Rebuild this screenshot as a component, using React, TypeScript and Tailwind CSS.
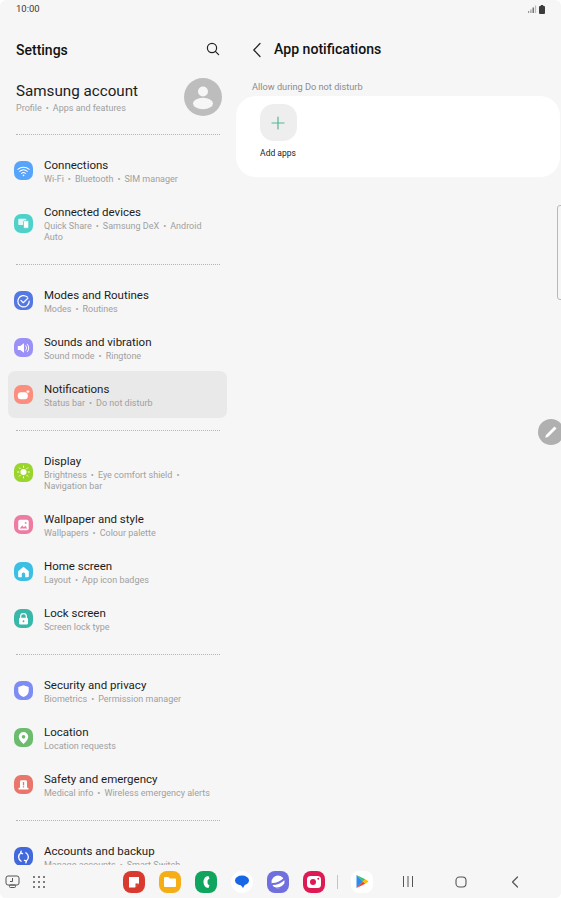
import React from "react";

const Dot = () => <><span className="mx-[4px] text-[#a4a4a4]">•</span><wbr /></>;

type Row = { title: string; sub: React.ReactNode; color: string; icon: React.ReactNode; active?: boolean; tall?: boolean };

const Wifi = (
  <svg viewBox="0 0 20 20" className="w-[20px] h-[20px]" fill="none" stroke="#fff" strokeWidth="1.1" strokeLinecap="round">
    <path d="M4 8.200c3.400-3 8.600-3 12 0" />
    <path d="M6 10.400c2.300-2 5.700-2 8 0" />
    <path d="M8 12.500c1.200-1 2.800-1 4 0" />
    <circle cx="10" cy="14.600" r="0.9" fill="#fff" stroke="none" />
  </svg>
);
const Devices = (
  <svg viewBox="0 0 20 20" className="w-[20px] h-[20px]" fill="#fff">
    <rect x="4.500" y="5.500" width="8.500" height="6.500" rx="1" opacity="0.85" />
    <rect x="10" y="7.500" width="5.500" height="8" rx="1" stroke="#4fd1c9" strokeWidth="0.8" />
  </svg>
);
const Modes = (
  <svg viewBox="0 0 20 20" className="w-[20px] h-[20px]" fill="none" stroke="#fff" strokeWidth="1.300" strokeLinecap="round" strokeLinejoin="round">
    <path d="M14 5.800A6 6 0 1 0 16 10" />
    <path d="M7.300 9.400l2.400 2.400 5-4.800" />
  </svg>
);
const Sound = (
  <svg viewBox="0 0 20 20" className="w-[20px] h-[20px]">
    <path d="M4 8h2.600L10.500 5v10l-3.900-3H4z" fill="#fff" />
    <path d="M12.400 7.600a3.400 3.400 0 0 1 0 4.800M14 6a5.600 5.600 0 0 1 0 8" fill="none" stroke="#fff" strokeWidth="1" strokeLinecap="round" />
  </svg>
);
const Bell = (
  <svg viewBox="0 0 20 20" className="w-[20px] h-[20px]" fill="#fff">
    <rect x="4" y="7" width="10.500" height="7.500" rx="3.200" />
    <circle cx="14.600" cy="6.400" r="1.700" stroke="#fb8e7f" strokeWidth="0.6" />
  </svg>
);
const Sun = (
  <svg viewBox="0 0 20 20" className="w-[20px] h-[20px]" stroke="#fff" strokeWidth="1" strokeLinecap="round">
    <circle cx="10" cy="10" r="3.200" fill="#fff" stroke="none" />
    <path d="M10 3.800v1.200M10 15v1.200M3.800 10H5M15 10h1.200M5.600 5.600l.9.900M13.500 13.500l.9.900M5.600 14.400l.9-.9M13.500 6.500l.9-.9" />
  </svg>
);
const Wallpaper = (
  <svg viewBox="0 0 20 20" className="w-[20px] h-[20px]">
    <rect x="4.500" y="4.500" width="11" height="11" rx="1.800" fill="#fff" />
    <path d="M6 13.800l2.600-3.200 1.800 1.800 1.600-1.600 2 3z" fill="#ee7ba2" />
    <circle cx="12.300" cy="7.800" r="1" fill="#ee7ba2" />
  </svg>
);
const Home = (
  <svg viewBox="0 0 20 20" className="w-[20px] h-[20px]">
    <path d="M10 4.600l5.600 4.600v5.400a.9.900 0 0 1-.9.900h-2.900v-3.200a1.800 1.800 0 0 0-3.600 0v3.200H5.300a.9.900 0 0 1-.9-.9V9.200z" fill="#fff" />
  </svg>
);
const Lock = (
  <svg viewBox="0 0 20 20" className="w-[20px] h-[20px]">
    <path d="M7 9V7.300a3 3 0 0 1 6 0V9" fill="none" stroke="#fff" strokeWidth="1.300" />
    <rect x="5.300" y="8.800" width="9.400" height="7" rx="1.300" fill="#fff" />
    <circle cx="10" cy="12.300" r="1" fill="#37b8a8" />
  </svg>
);
const Shield = (
  <svg viewBox="0 0 20 20" className="w-[20px] h-[20px]">
    <path d="M10 4l5.500 1.800v4.200c0 3-2.300 5.200-5.500 6.200-3.200-1-5.500-3.200-5.500-6.200V5.800z" fill="#fff" />
  </svg>
);
const Pin = (
  <svg viewBox="0 0 20 20" className="w-[20px] h-[20px]">
    <path d="M10 3.800a5 5 0 0 1 5 5c0 3-3 5.600-5 7.500-2-1.900-5-4.500-5-7.500a5 5 0 0 1 5-5z" fill="#fff" />
    <circle cx="10" cy="8.800" r="1.900" fill="#6dbb6e" />
  </svg>
);
const Alert = (
  <svg viewBox="0 0 20 20" className="w-[20px] h-[20px]">
    <path d="M7.800 5h4.400a1.500 1.500 0 0 1 1.500 1.500V13h1.500v1.800H4.800V13h1.500V6.500A1.500 1.500 0 0 1 7.800 5z" fill="#fff" />
    <rect x="9.300" y="6.800" width="1.400" height="3.600" fill="#e9756b" />
    <rect x="9.300" y="11.200" width="1.400" height="1.400" fill="#e9756b" />
  </svg>
);
const Sync = (
  <svg viewBox="0 0 20 20" className="w-[20px] h-[20px]" fill="none" stroke="#fff" strokeWidth="1.400" strokeLinecap="round" strokeLinejoin="round">
    <path d="M7.500 14.500A5.300 5.300 0 0 1 7 5.700M12.500 5.500a5.300 5.300 0 0 1 .5 8.800" />
    <path d="M7.500 3.800L7 5.900l2 .5M12.500 16.200l.5-2.100-2-.5" />
  </svg>
);

const groups: Row[][] = [
  [
    { title: "Connections", sub: <>Wi-Fi<Dot />Bluetooth<Dot />SIM manager</>, color: "bg-[#56a5fb]", icon: Wifi },
    { title: "Connected devices", sub: <>Quick Share<Dot />Samsung DeX<Dot />Android Auto</>, color: "bg-[#4fd1c9]", icon: Devices, tall: true },
  ],
  [
    { title: "Modes and Routines", sub: <>Modes<Dot />Routines</>, color: "bg-[#5378e3]", icon: Modes },
    { title: "Sounds and vibration", sub: <>Sound mode<Dot />Ringtone</>, color: "bg-[#9a90f6]", icon: Sound },
    { title: "Notifications", sub: <>Status bar<Dot />Do not disturb</>, color: "bg-[#fb8e7f]", icon: Bell, active: true },
  ],
  [
    { title: "Display", sub: <>Brightness<Dot />Eye comfort shield<Dot />Navigation bar</>, color: "bg-[#9ad52c]", icon: Sun, tall: true },
    { title: "Wallpaper and style", sub: <>Wallpapers<Dot />Colour palette</>, color: "bg-[#ee7ba2]", icon: Wallpaper },
    { title: "Home screen", sub: <>Layout<Dot />App icon badges</>, color: "bg-[#3dbfe4]", icon: Home },
    { title: "Lock screen", sub: "Screen lock type", color: "bg-[#37b8a8]", icon: Lock },
  ],
  [
    { title: "Security and privacy", sub: <>Biometrics<Dot />Permission manager</>, color: "bg-[#7e8cf6]", icon: Shield },
    { title: "Location", sub: "Location requests", color: "bg-[#6dbb6e]", icon: Pin },
    { title: "Safety and emergency", sub: <>Medical info<Dot />Wireless emergency alerts</>, color: "bg-[#e9756b]", icon: Alert },
  ],
  [
    { title: "Accounts and backup", sub: <>Manage accounts<Dot />Smart Switch</>, color: "bg-[#4169dd]", icon: Sync },
  ],
];

const Divider = () => (
  <div className="mx-[16px] my-[12px] h-px border-t border-dotted border-[#b4b4b4]" />
);

function SettingRow({ r }: { r: Row }) {
  return (
    <div className={`ml-[8px] mr-[9px] flex items-center rounded-[7px] pl-[6px] pr-[16px] ${r.tall ? "h-[58px]" : "h-[47px]"} ${r.active ? "bg-[#e9e9e9]" : ""}`}>
      <div className={`w-[19px] h-[19px] rounded-[7px] flex items-center justify-center shrink-0 ${r.color}`}>{r.icon}</div>
      <div className="ml-[11px] min-w-0 pt-[2px]">
        <div className="text-[11.5px] leading-[14px] text-[#1c1c1c]">{r.title}</div>
        <div className="text-[9px] leading-[11px] mt-[2px] text-[#a0a0a0]">{r.sub}</div>
      </div>
    </div>
  );
}

const Tile = ({ children, className = "" }: { children: React.ReactNode; className?: string }) => (
  <div className={`w-[22px] h-[22px] rounded-[8px] flex items-center justify-center overflow-hidden ${className}`}>{children}</div>
);

export default function App() {
  return (
    <div className="relative w-[561px] h-[898px] overflow-hidden bg-[#f6f6f6] rounded-[6px] flex flex-col font-['Roboto',sans-serif]">
      {/* status bar */}
      <div className="h-[16px] pt-[2px] pl-[16px] pr-[16px] flex items-center justify-between shrink-0">
        <span className="text-[9.5px] text-[#3a3a3a]">10:00</span>
        <div className="flex items-center gap-[2px]">
          <svg width="9" height="8" viewBox="0 0 9 8" fill="#9a9a9a"><rect x="0" y="6" width="1.200" height="2"/><rect x="2.300" y="4.500" width="1.200" height="3.500"/><rect x="4.600" y="2.500" width="1.200" height="5.500" fill="#555"/><rect x="6.900" y="0.500" width="1.200" height="7.500" fill="#bbb"/></svg>
          <svg width="6" height="9" viewBox="0 0 6 9" fill="#3c3c3c"><rect x="0" y="1" width="6" height="8" rx="1"/><rect x="1.800" y="0" width="2.400" height="1.500"/></svg>
        </div>
      </div>

      <div className="flex flex-1 min-h-0">
        {/* left */}
        <div className="w-[236px] shrink-0 overflow-hidden">
          <div className="h-[68px] pl-[16px] pr-[16px] flex items-center justify-between">
            <span className="text-[14px] font-medium text-[#111]">Settings</span>
            <svg width="16" height="16" viewBox="0 0 16 16" fill="none" stroke="#222" strokeWidth="1.200" strokeLinecap="round" className="mr-[-1px] mt-[-2px]">
              <circle cx="7" cy="7" r="4.600" />
              <path d="M10.400 10.400l3.200 3.200" />
            </svg>
          </div>
          <div className="h-[52px] pl-[16px] pr-[15px] flex items-center justify-between mt-[-14px] pt-[2px]">
            <div>
              <div className="text-[15.2px] leading-[20px] text-[#1c1c1c]">Samsung account</div>
              <div className="text-[9px] leading-[11px] mt-[2px] text-[#a0a0a0]">Profile<Dot />Apps and features</div>
            </div>
            <div className="w-[38px] h-[38px] rounded-full bg-[#bdbdbd] flex items-center justify-center mr-[-1px]">
              <svg width="38" height="38" viewBox="0 0 38 38" fill="#f6f6f6">
                <circle cx="19" cy="13.500" r="5" />
                <ellipse cx="19" cy="25.500" rx="10" ry="5.800" />
              </svg>
            </div>
          </div>
          {groups.map((g, i) => (
            <div key={i}>
              <Divider />
              {g.map((r) => <SettingRow key={r.title} r={r} />)}
            </div>
          ))}
        </div>

        {/* right */}
        <div className="flex-1 min-w-0">
          <div className="h-[68px] flex items-center pl-[16px]">
            <svg width="10" height="16" viewBox="0 0 10 16" fill="none" stroke="#222" strokeWidth="1.200" strokeLinecap="round" strokeLinejoin="round" className="mt-[-1px]">
              <path d="M8 1.500L1.800 8 8 14.500" />
            </svg>
            <span className="ml-[12px] text-[14.1px] font-medium text-[#111]">App notifications</span>
          </div>
          <div className="pl-[16px] text-[9.2px] leading-[12px] text-[#8c8c8c] h-[14px] mt-[-3px]">Allow during Do not disturb</div>
          <div className="h-[81px] mr-[1px] mt-[1px] rounded-[20px] bg-white pt-[8px] pl-[16px]">
            <div className="w-[52px] flex flex-col items-center">
              <div className="w-[37px] h-[37px] rounded-[14px] bg-[#eeeeee] flex items-center justify-center">
                <svg width="14" height="14" viewBox="0 0 14 14" stroke="#55b88f" strokeWidth="1.200" strokeLinecap="round"><path d="M7 1v12M1 7h12" /></svg>
              </div>
              <span className="mt-[7px] text-[8.5px] leading-[11px] text-[#222] whitespace-nowrap">Add apps</span>
            </div>
          </div>
        </div>
      </div>

      {/* taskbar */}
      <div className="h-[33px] shrink-0 bg-[#f6f6f6] flex items-center relative">
        <div className="w-[123px] flex items-center shrink-0 pl-[5px]">
          <svg width="15" height="15" viewBox="0 0 15 15" fill="none" stroke="#555" strokeWidth="1">
            <rect x="1" y="2" width="13" height="9" rx="2" />
            <path d="M7.500 4v3.500H5" />
            <rect x="4.500" y="11" width="6" height="2.500" rx="1" />
          </svg>
          <svg width="14" height="14" viewBox="0 0 14 14" fill="#555" className="ml-[12px]">
            {[2, 7, 12].flatMap((y) => [2, 7, 12].map((x) => <circle key={`${x}${y}`} cx={x} cy={y} r="1" />))}
          </svg>
        </div>
        <div className="flex items-center gap-[14px]">
          <Tile className="bg-[#d93a2f]">
            <svg width="14" height="14" viewBox="0 0 14 14" fill="#fff"><path d="M2 2h10v6.500L8 12.500H2z" /><path d="M8.500 8.500h3.500l-3.500 3.500z" fill="#d93a2f" /></svg>
          </Tile>
          <Tile className="bg-[#f5ae15]">
            <svg width="14" height="12" viewBox="0 0 14 12" fill="#fff"><path d="M1 2a1 1 0 0 1 1-1h3.500l1.300 1.500H12a1 1 0 0 1 1 1V10a1 1 0 0 1-1 1H2a1 1 0 0 1-1-1z" /></svg>
          </Tile>
          <Tile className="bg-[#0fa55f]">
            <svg width="12" height="14" viewBox="0 0 12 14" fill="#fff"><path d="M8.500 1C5.500 1 3.500 3.800 3.500 7s2 6 5 6l1-3c-1.500 0-2-1.300-2-3s.5-3 2-3z" /></svg>
          </Tile>
          <Tile className="bg-white rounded-full">
            <svg width="16" height="15" viewBox="0 0 16 15"><ellipse cx="8" cy="6.500" rx="7" ry="5" fill="#1868e6" /><path d="M6 10l5 .5-2 3.500z" fill="#1868e6" /></svg>
          </Tile>
          <Tile className="bg-[#6f6fe0]">
            <svg width="18" height="18" viewBox="0 0 18 18" fill="none"><circle cx="9" cy="9" r="6.500" fill="#fff" /><path d="M2.500 11c4 .3 9-1.500 13-5.300" stroke="#6f6fe0" strokeWidth="2" /><path d="M2.500 12.500c4 3 9 3 13-2l1 5H2z" fill="#6f6fe0" /></svg>
          </Tile>
          <Tile className="bg-[#dd1a54]">
            <svg width="16" height="14" viewBox="0 0 16 14" fill="#fff"><rect x="1" y="1" width="14" height="12" rx="3.500" /><circle cx="7" cy="7" r="3" fill="#dd1a54" /><circle cx="12.300" cy="3.700" r="1" fill="#dd1a54" /></svg>
          </Tile>
        </div>
        <div className="w-px h-[14px] bg-[#c4c4c4] ml-[12px]" />
        <Tile className="bg-white rounded-[8px] ml-[13px]">
          <svg width="14" height="15" viewBox="0 0 14 15">
            <path d="M1.500 1v13L8 7.500z" fill="#2c8df0" />
            <path d="M1.500 1L8 7.500l2.300-2.300z" fill="#38c173" />
            <path d="M1.500 14L8 7.500l2.300 2.300z" fill="#ea4335" />
            <path d="M10.300 5.200L13.500 7.500l-3.200 2.300L8 7.500z" fill="#fbbc04" />
          </svg>
        </Tile>
        <div className="ml-[29px] flex items-center text-[#555]">
          <svg width="12" height="11" viewBox="0 0 12 11" stroke="#555" strokeWidth="1"><path d="M1.500 0v11M6 0v11M10.500 0v11" /></svg>
          <svg width="12" height="12" viewBox="0 0 12 12" fill="none" stroke="#555" strokeWidth="1.100" className="ml-[41px]"><rect x="1" y="1" width="10" height="10" rx="3.500" /></svg>
          <svg width="8" height="12" viewBox="0 0 8 12" fill="none" stroke="#555" strokeWidth="1.200" strokeLinecap="round" strokeLinejoin="round" className="ml-[44px]"><path d="M6.500 1L1.500 6l5 5" /></svg>
        </div>
      </div>

      {/* overlays */}
      <div className="absolute left-[557px] top-[205px] w-[8px] h-[95px] rounded-[3px] border border-[#b8b8b8]" />
      <div className="absolute left-[538px] top-[419px] w-[26px] h-[26px] rounded-full bg-[#b0b0b0] flex items-center justify-center">
        <svg width="14" height="14" viewBox="0 0 14 14" fill="#fff"><path d="M10.500 1.500l2 2-8.500 8.500-2.800.8.800-2.800z" /></svg>
      </div>
    </div>
  );
}
